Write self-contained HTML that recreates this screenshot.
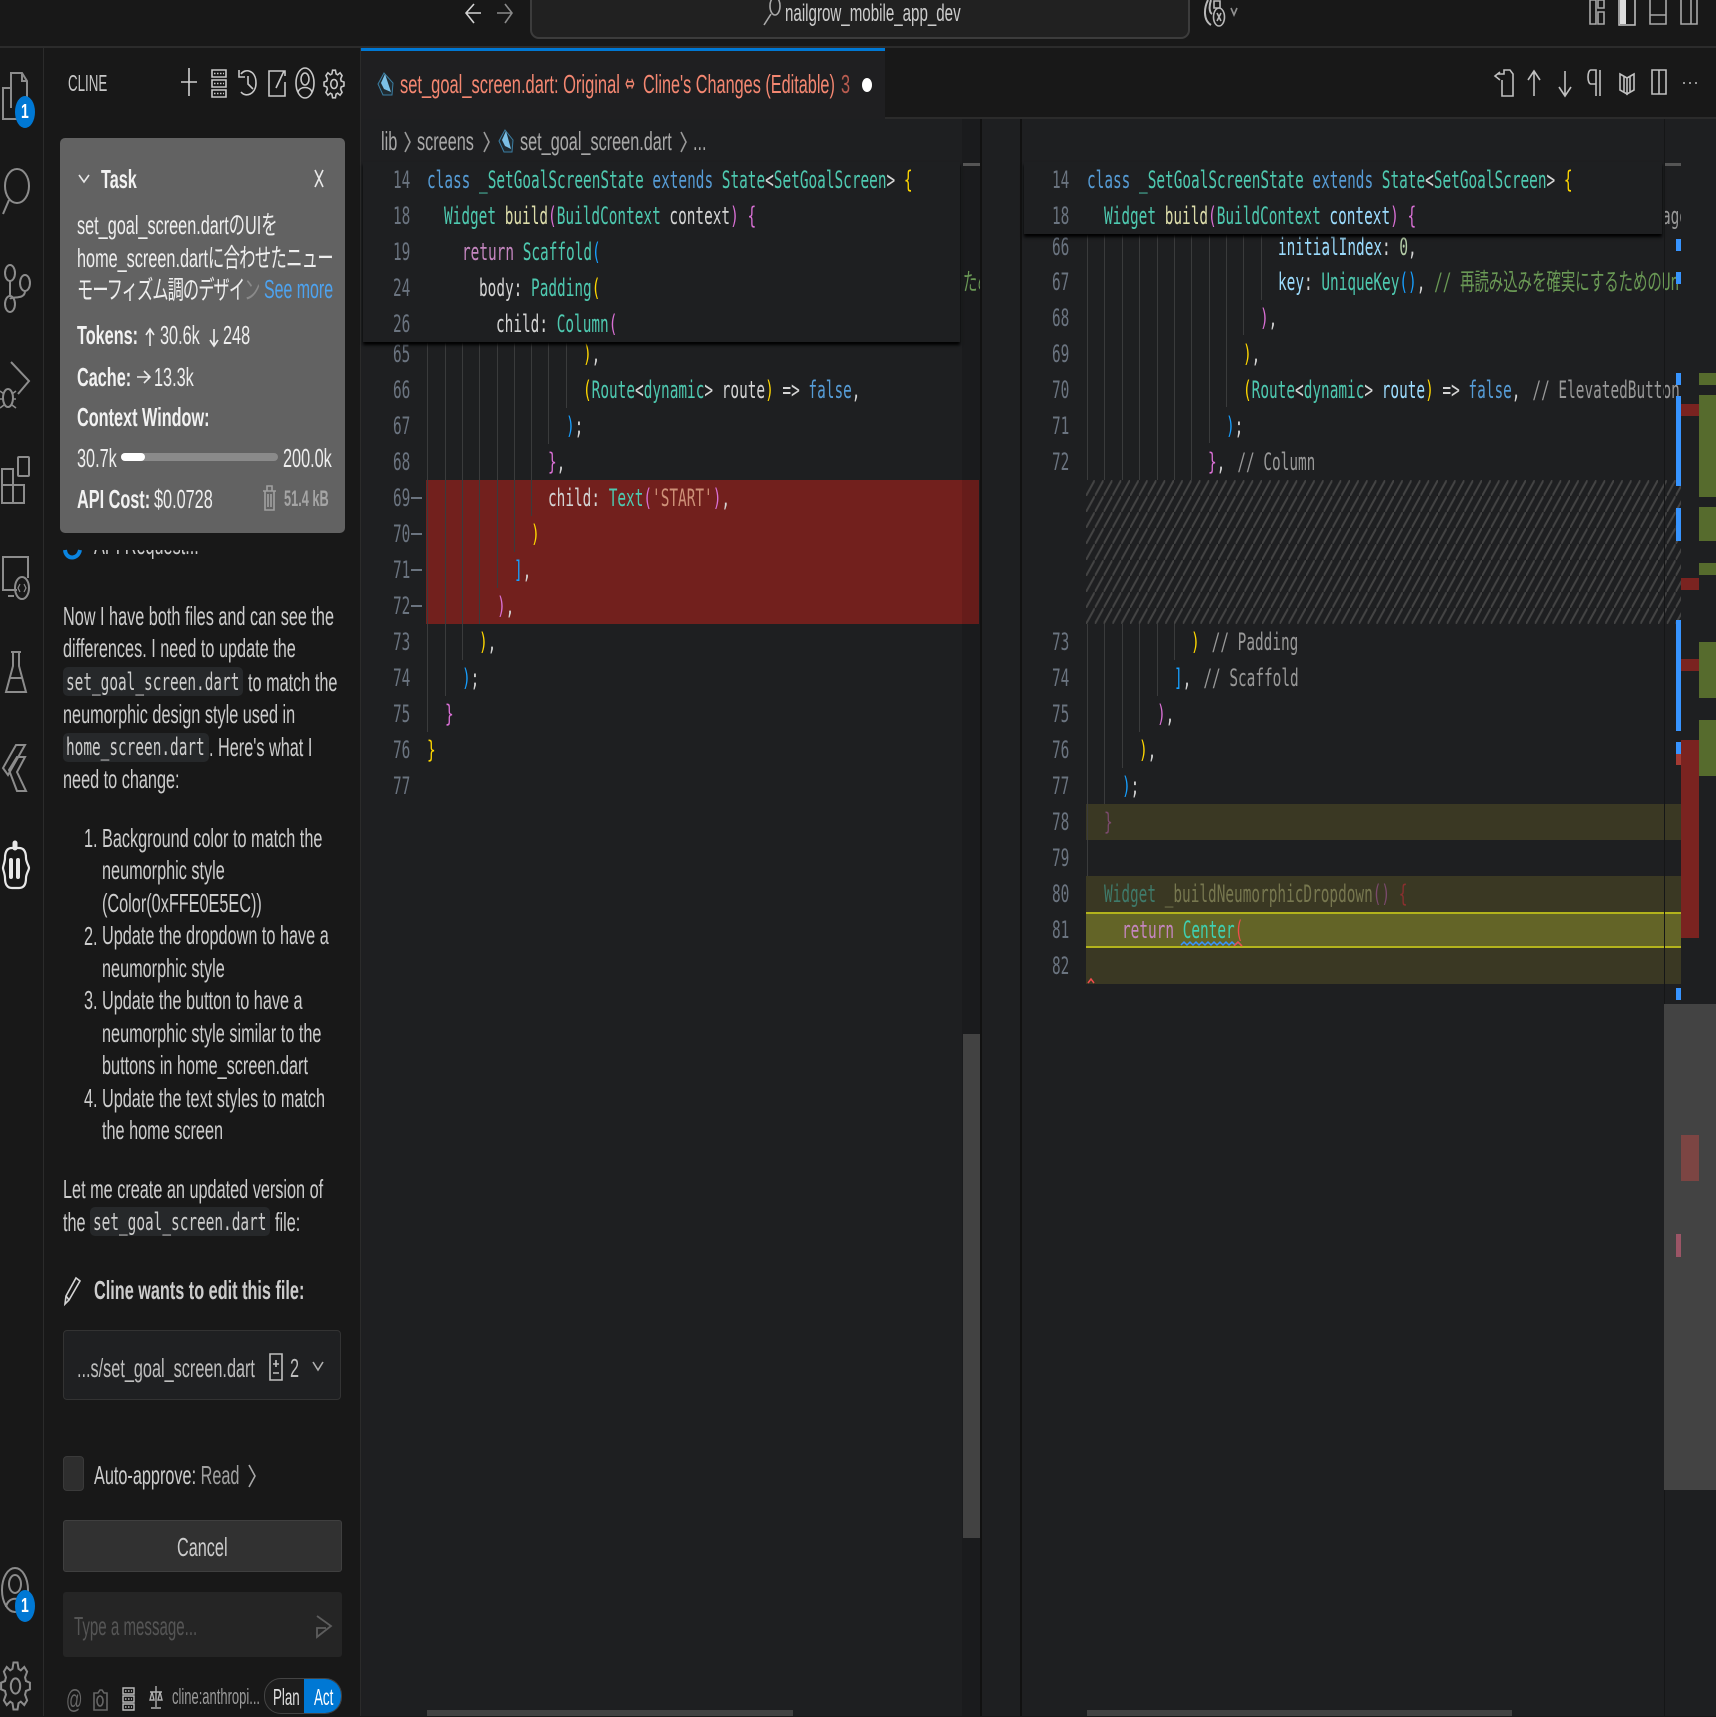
<!DOCTYPE html>
<html><head><meta charset="utf-8"><style>
html,body{margin:0;padding:0;background:#181818;width:1716px;height:1716px;overflow:hidden}
.a{position:absolute}
.t{position:absolute;white-space:pre;transform-origin:0 50%;transform:scaleX(.6);line-height:36px;height:36px;font-family:"DejaVu Sans Mono","Noto Sans CJK JP",monospace;font-size:24px;color:#d4d4d4}
.s{font-family:"Liberation Sans","Noto Sans CJK JP",sans-serif;font-size:26px;color:#ccc;transform:scaleX(.625)}
.n{color:#6b7480}
.g{position:absolute;width:1px;background:#3a3b3c}
.k{color:#569cd6}.y{color:#4ec9b0}.f{color:#dcdcaa}.v{color:#9cdcfe}.r{color:#c586c0}.go{color:#ffd700}.p{color:#da70d6}.b{color:#179fff}.w{color:#d4d4d4}.cg{color:#6a9955}.cd{color:#989898;margin-left:5.5px}.st{color:#ce9178}.nu{color:#b5cea8}
.bo{font-weight:bold}
.chip{position:absolute;background:#26282a;border-radius:5px;height:29px}
</style></head><body>
<!-- chrome backgrounds -->
<div class="a" style="left:0;top:0;width:1716px;height:46px;background:#181818"></div>
<div class="a" style="left:0;top:46px;width:1716px;height:2px;background:#2b2b2b"></div>
<div class="a" style="left:43px;top:48px;width:1px;height:1668px;background:#2b2b2b"></div>
<div class="a" style="left:361px;top:48px;width:1355px;height:70px;background:#181818"></div>
<div class="a" style="left:361px;top:117px;width:1355px;height:2px;background:#2b2b2b"></div>
<div class="a" style="left:360px;top:48px;width:1px;height:1668px;background:#2b2b2b"></div>
<div class="a" style="left:361px;top:119px;width:1355px;height:1597px;background:#1e1f21"></div>
<div class="a" style="left:361px;top:48px;width:524px;height:71px;background:#1f1f21"></div>
<div class="a" style="left:361px;top:48px;width:524px;height:3px;background:#0078d4"></div>
<div class="a" style="left:530px;top:-3px;width:656px;height:38px;background:#212121;border:2px solid #3c3c3c;border-radius:0 0 9px 9px"></div>
<!-- search text -->
<div class="t s" style="left:785px;top:-4px;font-size:24.2px;color:#ccc">nailgrow_mobile_app_dev</div>
<!-- tab -->
<div class="t s" style="left:400px;top:66px;font-size:26px;color:#f48771;transform:scaleX(.634)">set_goal_screen.dart: Original</div>
<div class="t s" style="left:625px;top:66px;font-family:'DejaVu Sans',sans-serif;font-size:26px;color:#f48771;transform:scaleX(.45)">⇔</div>
<div class="t s" style="left:642.5px;top:66px;font-size:26px;color:#f48771">Cline's Changes (Editable)</div>
<div class="t s" style="left:841px;top:66px;color:#b85c50;font-size:26px">3</div>
<div class="a" style="left:862px;top:78px;width:10px;height:14px;background:#fff;border-radius:50%"></div>
<!-- breadcrumb -->
<div class="t s" style="left:381px;top:123px;color:#a8a8a8">lib</div>
<div class="t s" style="left:417px;top:123px;color:#a8a8a8">screens</div>
<div class="t s" style="left:520px;top:123px;color:#a8a8a8">set_goal_screen.dart</div>
<div class="t s" style="left:693px;top:123px;color:#a8a8a8">...</div>

<!-- sidebar -->
<div class="t s" style="left:68px;top:65px;font-size:23px;color:#c8c8c8;transform:scaleX(.58)">CLINE</div>
<div class="a" style="left:60px;top:138px;width:285px;height:395px;background:#626262;border-radius:5px"></div>
<div class="t s bo" style="left:101px;top:161px;color:#f2f2f2">Task</div>
<div class="t s" style="left:77px;top:207px;color:#eee">set_goal_screen.dartのUIを</div>
<div class="t s" style="left:77px;top:240px;color:#eee">home_screen.dart<span style="letter-spacing:-1px">に合わせたニュー</span></div>
<div class="t s" style="left:77px;top:272px;color:#eee;letter-spacing:-1.5px">モーフィズム調のデザイ<span style="color:#8a8a8a">ン</span></div>
<div class="t s" style="left:264px;top:272px;color:#4da3f0;font-size:25.5px">See more</div>
<div class="t s bo" style="left:77px;top:317px;color:#f2f2f2">Tokens:</div>
<div class="t s" style="left:160px;top:317px;color:#eee">30.6k</div>
<div class="t s" style="left:223px;top:317px;color:#eee">248</div>
<div class="t s bo" style="left:77px;top:359px;color:#f2f2f2">Cache:</div>
<div class="t s" style="left:154px;top:359px;color:#eee">13.3k</div>
<div class="t s bo" style="left:77px;top:399px;color:#f2f2f2">Context Window:</div>
<div class="t s" style="left:77px;top:440px;color:#eee">30.7k</div>
<div class="a" style="left:121px;top:453px;width:157px;height:8px;background:#8a8a8a;border-radius:4px"></div>
<div class="a" style="left:121px;top:453px;width:24px;height:8px;background:#fff;border-radius:4px"></div>
<div class="t s" style="left:283px;top:440px;color:#eee">200.0k</div>
<div class="t s bo" style="left:77px;top:481px;color:#f2f2f2">API Cost:</div>
<div class="t s" style="left:154px;top:481px;color:#eee">$0.0728</div>
<div class="t s bo" style="left:284px;top:481px;color:#a5a5a5;font-size:22px;transform:scaleX(.58)">51.4 kB</div>

<div class="a" style="left:90px;top:550px;width:120px;height:9px;overflow:hidden"><div class="t s" style="left:4px;top:-23px;color:#ccc">API Request...</div></div>

<!-- message -->
<div class="chip" style="left:63px;top:667px;width:180px"></div>
<div class="chip" style="left:63px;top:733px;width:146px"></div>
<div class="chip" style="left:90px;top:1207px;width:180px"></div>
<div class="t s" style="left:63px;top:598px">Now I have both files and can see the</div>
<div class="t s" style="left:63px;top:630px">differences. I need to update the</div>
<div class="t" style="left:66px;top:664px;color:#ccc">set_goal_screen.dart</div>
<div class="t s" style="left:248px;top:664px">to match the</div>
<div class="t s" style="left:63px;top:696px">neumorphic design style used in</div>
<div class="t" style="left:66px;top:729px;color:#ccc">home_screen.dart</div>
<div class="t s" style="left:209px;top:729px">. Here's what I</div>
<div class="t s" style="left:63px;top:761px">need to change:</div>
<div class="t s" style="left:84px;top:820px">1.</div><div class="t s" style="left:102px;top:820px">Background color to match the</div>
<div class="t s" style="left:102px;top:852px">neumorphic style</div>
<div class="t s" style="left:102px;top:885px">(Color(0xFFE0E5EC))</div>
<div class="t s" style="left:84px;top:918px">2.</div><div class="t s" style="left:102px;top:917px">Update the dropdown to have a</div>
<div class="t s" style="left:102px;top:950px">neumorphic style</div>
<div class="t s" style="left:84px;top:982px">3.</div><div class="t s" style="left:102px;top:982px">Update the button to have a</div>
<div class="t s" style="left:102px;top:1015px">neumorphic style similar to the</div>
<div class="t s" style="left:102px;top:1047px">buttons in home_screen.dart</div>
<div class="t s" style="left:84px;top:1080px">4.</div><div class="t s" style="left:102px;top:1080px">Update the text styles to match</div>
<div class="t s" style="left:102px;top:1112px">the home screen</div>
<div class="t s" style="left:63px;top:1171px">Let me create an updated version of</div>
<div class="t s" style="left:63px;top:1204px">the</div>
<div class="t" style="left:93px;top:1204px;color:#ccc">set_goal_screen.dart</div>
<div class="t s" style="left:275px;top:1204px">file:</div>
<div class="t s bo" style="left:94px;top:1272px">Cline wants to edit this file:</div>
<div class="a" style="left:63px;top:1330px;width:278px;height:70px;background:#1f2022;border:1px solid #333;border-radius:4px;box-sizing:border-box"></div>
<div class="t s" style="left:77px;top:1350px;color:#bdbdbd">...s/set_goal_screen.dart</div>
<div class="t s" style="left:290px;top:1350px;color:#bdbdbd">2</div>
<div class="a" style="left:63px;top:1456px;width:21px;height:35px;background:#2e2e2e;border:1px solid #3a3a3a;border-radius:4px;box-sizing:border-box"></div>
<div class="t s" style="left:94px;top:1457px">Auto-approve: <span style="color:#a0a0a0">Read</span></div>
<div class="a" style="left:63px;top:1520px;width:279px;height:52px;background:#313131;border:1px solid #3f3f3f;border-radius:3px;box-sizing:border-box"></div>
<div class="t s" style="left:177px;top:1529px">Cancel</div>
<div class="a" style="left:63px;top:1592px;width:279px;height:65px;background:#252525;border-radius:3px"></div>
<div class="t s" style="left:74px;top:1608px;color:#555;transform:scaleX(.58)">Type a message...</div>
<div class="t s" style="left:172px;top:1679px;font-size:22px;color:#9a9a9a;transform:scaleX(.59)">cline:anthropi...</div>
<div class="t s" style="left:66px;top:1681px;color:#666">@</div>
<div class="a" style="left:264px;top:1678px;width:78px;height:36px;background:#1d1d1d;border:1px solid #444;border-radius:17px;box-sizing:border-box;overflow:hidden"><div class="a" style="left:39px;top:0;width:39px;height:36px;background:#0078d4"></div></div>
<div class="t s" style="left:273px;top:1679px;font-size:23px;color:#e0e0e0;transform:scaleX(.58)">Plan</div>
<div class="t s" style="left:314px;top:1679px;font-size:23px;color:#fff;transform:scaleX(.58)">Act</div>

<!-- left pane -->
<div class="a" style="left:426px;top:480px;width:553px;height:144px;background:#72201d"></div>
<div class="a" style="left:962px;top:119px;width:18px;height:1597px;background:rgba(0,0,0,.1)"></div>
<div class="a" style="left:980px;top:119px;width:2px;height:1597px;background:#111"></div>
<div class="a" style="left:1020px;top:119px;width:2px;height:1597px;background:#111"></div>
<div class="g" style="left:427px;top:342px;height:390px"></div>
<div class="g" style="left:445px;top:342px;height:354px"></div>
<div class="g" style="left:462px;top:342px;height:318px"></div>
<div class="g" style="left:479px;top:342px;height:282px"></div>
<div class="g" style="left:497px;top:342px;height:246px"></div>
<div class="g" style="left:514px;top:342px;height:210px"></div>
<div class="g" style="left:531px;top:342px;height:174px"></div>
<div class="g" style="left:548px;top:342px;height:102px"></div>
<div class="g" style="left:566px;top:342px;height:66px"></div>
<div class="a" style="left:0;top:0;width:1716px;height:1716px;clip-path:inset(342px 737px 0 361px)">
<div class="t n" style="left:393px;top:336px">65</div><div class="t" style="left:583px;top:336px"><span class="go">)</span>,</div>
<div class="t n" style="left:393px;top:372px">66</div><div class="t" style="left:583px;top:372px"><span class="go">(</span><span class="y">Route</span>&lt;<span class="y">dynamic</span>&gt; route<span class="go">)</span> =&gt; <span class="k">false</span>,</div>
<div class="t n" style="left:393px;top:408px">67</div><div class="t" style="left:566px;top:408px"><span class="b">)</span>;</div>
<div class="t n" style="left:393px;top:444px">68</div><div class="t" style="left:548px;top:444px"><span class="p">}</span>,</div>
<div class="t n" style="left:393px;top:480px">69</div><div class="t" style="left:548px;top:480px">child: <span class="y">Text</span><span class="p">(</span><span class="st">'START'</span><span class="p">)</span>,</div>
<div class="t n" style="left:393px;top:516px">70</div><div class="t" style="left:531px;top:516px"><span class="go">)</span></div>
<div class="t n" style="left:393px;top:552px">71</div><div class="t" style="left:514px;top:552px"><span class="b">]</span>,</div>
<div class="t n" style="left:393px;top:588px">72</div><div class="t" style="left:497px;top:588px"><span class="p">)</span>,</div>
<div class="t n" style="left:393px;top:624px">73</div><div class="t" style="left:479px;top:624px"><span class="go">)</span>,</div>
<div class="t n" style="left:393px;top:660px">74</div><div class="t" style="left:462px;top:660px"><span class="b">)</span>;</div>
<div class="t n" style="left:393px;top:696px">75</div><div class="t" style="left:445px;top:696px"><span class="p">}</span></div>
<div class="t n" style="left:393px;top:732px">76</div><div class="t" style="left:427px;top:732px"><span class="go">}</span></div>
<div class="t n" style="left:393px;top:768px">77</div>
</div>
<div class="a" style="left:963px;top:270px;width:17px;height:28px;overflow:hidden"><div class="t cg" style="left:0;top:-6px">ため</div></div>
<div class="a" style="left:363px;top:162px;width:597px;height:180px;background:#1e1f21;box-shadow:0 3px 3px #000"></div>
<div class="t n" style="left:393px;top:162px">14</div><div class="t" style="left:427px;top:162px"><span class="k">class</span> <span class="y">_SetGoalScreenState</span> <span class="k">extends</span> <span class="y">State</span>&lt;<span class="y">SetGoalScreen</span>&gt; <span class="go">{</span></div>
<div class="t n" style="left:393px;top:198px">18</div><div class="t" style="left:444px;top:198px"><span class="y">Widget</span> <span class="f">build</span><span class="p">(</span><span class="y">BuildContext</span> context<span class="p">)</span> <span class="p">{</span></div>
<div class="t n" style="left:393px;top:234px">19</div><div class="t" style="left:462px;top:234px"><span class="r">return</span> <span class="y">Scaffold</span><span class="b">(</span></div>
<div class="t n" style="left:393px;top:270px">24</div><div class="t" style="left:479px;top:270px">body: <span class="y">Padding</span><span class="go">(</span></div>
<div class="t n" style="left:393px;top:306px">26</div><div class="t" style="left:496px;top:306px">child: <span class="y">Column</span><span class="p">(</span></div>
<div class="a" style="left:963px;top:163px;width:17px;height:3px;background:#555"></div>
<div class="a" style="left:963px;top:1034px;width:17px;height:504px;background:#424242"></div>
<div class="a" style="left:427px;top:1710px;width:366px;height:6px;background:#424242"></div>

<!-- right pane -->
<div class="a" style="left:1086px;top:480px;width:595px;height:144px;overflow:hidden"><svg width="595" height="144" style="display:block"><defs><pattern id="h" width="8.8" height="16" patternUnits="userSpaceOnUse"><path d="M-2.2 20 L2.2 12 M0 16 L8.8 0 M6.6 4 L11 -4" stroke="#444" stroke-width="2"/></pattern></defs><rect width="595" height="144" fill="url(#h)"/></svg></div>
<div class="a" style="left:1086px;top:804px;width:595px;height:36px;background:#3a3823"></div>
<div class="a" style="left:1086px;top:876px;width:595px;height:36px;background:#3a3823"></div>
<div class="a" style="left:1086px;top:912px;width:595px;height:36px;background:#636427;border-top:2px solid #b3b31c;border-bottom:2px solid #b3b31c;box-sizing:border-box"></div>
<div class="a" style="left:1086px;top:948px;width:595px;height:36px;background:#3a3823"></div>
<div class="g" style="left:1087px;top:234px;height:246px"></div><div class="g" style="left:1104px;top:234px;height:246px"></div><div class="g" style="left:1122px;top:234px;height:246px"></div><div class="g" style="left:1139px;top:234px;height:246px"></div><div class="g" style="left:1157px;top:234px;height:246px"></div><div class="g" style="left:1174px;top:234px;height:246px"></div><div class="g" style="left:1191px;top:234px;height:246px"></div>
<div class="g" style="left:1209px;top:234px;height:209px"></div><div class="g" style="left:1226px;top:234px;height:173px"></div><div class="g" style="left:1243px;top:234px;height:101px"></div><div class="g" style="left:1261px;top:234px;height:66px"></div>
<div class="g" style="left:1087px;top:624px;height:252px"></div><div class="g" style="left:1104px;top:624px;height:180px"></div><div class="g" style="left:1122px;top:624px;height:144px"></div><div class="g" style="left:1139px;top:624px;height:108px"></div><div class="g" style="left:1157px;top:624px;height:72px"></div><div class="g" style="left:1174px;top:624px;height:36px"></div>
<div class="a" style="left:0;top:0;width:1716px;height:1716px;clip-path:inset(234px 36px 0 1022px)">
<div class="t n" style="left:1052px;top:229px">66</div><div class="t v" style="left:1278px;top:229px">initialIndex<span class="w">:</span> <span class="nu">0</span><span class="w">,</span></div>
<div class="t n" style="left:1052px;top:264px">67</div><div class="t v" style="left:1278px;top:264px">key<span class="w">:</span> <span class="y">UniqueKey</span><span class="b">()</span><span class="w">,</span> <span class="cg">// 再読み込みを確実にするためのUniqueKey</span></div>
<div class="t n" style="left:1052px;top:300px">68</div><div class="t" style="left:1260px;top:300px"><span class="p">)</span>,</div>
<div class="t n" style="left:1052px;top:336px">69</div><div class="t" style="left:1243px;top:336px"><span class="go">)</span>,</div>
<div class="t n" style="left:1052px;top:372px">70</div><div class="t" style="left:1243px;top:372px"><span class="go">(</span><span class="y">Route</span>&lt;<span class="y">dynamic</span>&gt; <span class="v">route</span><span class="go">)</span> =&gt; <span class="k">false</span>, <span class="cd">// ElevatedButton</span></div>
<div class="t n" style="left:1052px;top:408px">71</div><div class="t" style="left:1226px;top:408px"><span class="b">)</span>;</div>
<div class="t n" style="left:1052px;top:444px">72</div><div class="t" style="left:1208px;top:444px"><span class="p">}</span>, <span class="cd">// Column</span></div>
<div class="t n" style="left:1052px;top:624px">73</div><div class="t" style="left:1191px;top:624px"><span class="go">)</span> <span class="cd">// Padding</span></div>
<div class="t n" style="left:1052px;top:660px">74</div><div class="t" style="left:1174px;top:660px"><span class="b">]</span>, <span class="cd">// Scaffold</span></div>
<div class="t n" style="left:1052px;top:696px">75</div><div class="t" style="left:1157px;top:696px"><span class="p">)</span>,</div>
<div class="t n" style="left:1052px;top:732px">76</div><div class="t" style="left:1139px;top:732px"><span class="go">)</span>,</div>
<div class="t n" style="left:1052px;top:768px">77</div><div class="t" style="left:1122px;top:768px"><span class="b">)</span>;</div>
<div class="t n" style="left:1052px;top:804px">78</div><div class="t" style="left:1104px;top:804px;color:#7a4a6c">}</div>
<div class="t n" style="left:1052px;top:840px">79</div>
<div class="t n" style="left:1052px;top:876px">80</div><div class="t" style="left:1104px;top:876px;color:#77774f"><span style="color:#3f7a6a">Widget</span> _buildNeumorphicDropdown<span style="color:#7a4a6c">()</span> <span style="color:#8a2f2f">{</span></div>
<div class="t n" style="left:1052px;top:912px">81</div><div class="t" style="left:1122px;top:912px"><span class="r">return</span> <span style="color:#3fd0b0">Center</span><span style="color:#f14c4c">(</span></div>
<div class="t n" style="left:1052px;top:948px">82</div>
</div>
<div class="a" style="left:1664px;top:198px;width:17px;height:36px;overflow:hidden"><div class="t" style="left:-2px;top:0;color:#999">age</div></div>
<div class="a" style="left:1024px;top:162px;width:638px;height:72px;background:#1e1f21;box-shadow:0 3px 3px #000"></div>
<div class="t n" style="left:1052px;top:162px">14</div><div class="t" style="left:1087px;top:162px"><span class="k">class</span> <span class="y">_SetGoalScreenState</span> <span class="k">extends</span> <span class="y">State</span>&lt;<span class="y">SetGoalScreen</span>&gt; <span class="go">{</span></div>
<div class="t n" style="left:1052px;top:198px">18</div><div class="t" style="left:1104px;top:198px"><span class="y">Widget</span> <span class="f">build</span><span class="p">(</span><span class="y">BuildContext</span> <span class="v">context</span><span class="p">)</span> <span class="p">{</span></div>
<div class="a" style="left:1664px;top:163px;width:17px;height:3px;background:#555"></div>
<div class="a" style="left:1087px;top:1710px;width:425px;height:6px;background:#424242"></div>

<!-- overview ruler -->
<div class="a" style="left:1664px;top:119px;width:1px;height:1597px;background:#151617"></div>
<div class="a" style="left:1664px;top:1004px;width:52px;height:486px;background:#434343"></div>
<div class="a" style="left:1681px;top:1135px;width:18px;height:46px;background:#7c4543"></div>
<div class="a" style="left:1676px;top:1234px;width:5px;height:23px;background:#9b5566"></div>
<div class="a" style="left:1676px;top:239px;width:5px;height:12px;background:#3794ff"></div>
<div class="a" style="left:1676px;top:272px;width:5px;height:12px;background:#3794ff"></div>
<div class="a" style="left:1676px;top:373px;width:5px;height:12px;background:#3794ff"></div>
<div class="a" style="left:1676px;top:396px;width:5px;height:90px;background:#3794ff"></div>
<div class="a" style="left:1676px;top:508px;width:5px;height:33px;background:#3794ff"></div>
<div class="a" style="left:1676px;top:620px;width:5px;height:111px;background:#3794ff"></div>
<div class="a" style="left:1676px;top:742px;width:5px;height:12px;background:#3794ff"></div>
<div class="a" style="left:1676px;top:754px;width:5px;height:11px;background:#a33a33"></div>
<div class="a" style="left:1676px;top:988px;width:5px;height:12px;background:#3794ff"></div>
<div class="a" style="left:1681px;top:404px;width:18px;height:12px;background:#7a2320"></div>
<div class="a" style="left:1681px;top:578px;width:18px;height:12px;background:#7a2320"></div>
<div class="a" style="left:1681px;top:659px;width:18px;height:12px;background:#7a2320"></div>
<div class="a" style="left:1681px;top:740px;width:18px;height:198px;background:#7a2320"></div>
<div class="a" style="left:1699px;top:373px;width:17px;height:12px;background:#566b2d"></div>
<div class="a" style="left:1699px;top:395px;width:17px;height:102px;background:#566b2d"></div>
<div class="a" style="left:1699px;top:507px;width:17px;height:34px;background:#566b2d"></div>
<div class="a" style="left:1699px;top:563px;width:17px;height:12px;background:#566b2d"></div>
<div class="a" style="left:1699px;top:642px;width:17px;height:56px;background:#566b2d"></div>
<div class="a" style="left:1699px;top:720px;width:17px;height:56px;background:#566b2d"></div>

<!-- icons -->
<svg class="a" style="left:0;top:0" width="1716" height="1716" viewBox="0 0 1716 1716" fill="none" stroke="#8c8c8c" stroke-width="1.6">
 <!-- deleted-line markers -->
 <path d="M411 498H422M411 534H422M411 570H422M411 606H422" stroke="#6b7480" stroke-width="2"/>
 <!-- activity -->
 <path d="M11 108V73h11l5 8v27M22 73v8h5M11 88H3v31h17v-8" stroke-width="2"/>
 <ellipse cx="17" cy="186" rx="12" ry="17" stroke-width="2"/><path d="M9 200L3 214" stroke-width="2"/>
 <ellipse cx="10" cy="273" rx="5" ry="8" stroke-width="2"/><ellipse cx="10" cy="304" rx="5" ry="8" stroke-width="2"/><ellipse cx="25" cy="283" rx="5" ry="8" stroke-width="2"/><path d="M10 281V296M25 291C25 300 12 296 10 299" stroke-width="2"/>
 <path d="M11 362L29 381L18 394" stroke-width="2"/><ellipse cx="8" cy="398" rx="5" ry="9" stroke-width="2"/><path d="M0 391l4 3M16 391l-4 3M0 399h4M16 399h-4M0 408l4-3M16 408l-4-3" stroke-width="1.6"/>
 <rect x="18" y="457" width="11" height="19" rx="1" stroke-width="2"/><path d="M2 469H13V485H24V503H2ZM2 485H13V503" stroke-width="2"/>
 <path d="M28 578V557H3V590H17M8 596H14" stroke-width="2"/><ellipse cx="22" cy="588" rx="7" ry="11" stroke-width="2"/><path d="M20 584l-2 4 2 4M24 584l2 4-2 4" stroke-width="1.2"/>
 <path d="M11 652h10M13 652v14L6 692h20l-7-26V652M9 678h14" stroke-width="2"/>
 <path d="M25 745H16L3 768L8 775ZM25 757H17L9 770L17 791H26L17 772Z" stroke-width="2"/>
 <path d="M15 848V843" stroke="#e8e8e8" stroke-width="5" stroke-linecap="round"/><path d="M12 848H19C24 848 26 852 26 858C26 862 29 866 29 868C29 870 26 874 26 878C26 884 24 888 19 888H12C7 888 5 884 5 878C5 874 3 870 3 868C3 866 5 862 5 858C5 852 7 848 12 848Z" stroke="#e8e8e8" stroke-width="2.2"/><path d="M11 860V877M18 860V877" stroke="#e8e8e8" stroke-width="4" stroke-linecap="round"/>
 <ellipse cx="15" cy="1590" rx="13" ry="22" stroke-width="2"/><ellipse cx="15" cy="1584" rx="6" ry="9" stroke-width="2"/><path d="M6 1607C8 1596 22 1596 24 1607" stroke-width="2"/>
 <g transform="translate(15.5 1686) scale(1.04 1.7)"><path vector-effect="non-scaling-stroke" stroke-width="2" d="M10.09 -2.89L13.86 -1.95L13.86 1.95L10.09 2.89L9.18 5.09L11.18 8.43L8.43 11.18L5.09 9.18L2.89 10.09L1.95 13.86L-1.95 13.86L-2.89 10.09L-5.09 9.18L-8.43 11.18L-11.18 8.43L-9.18 5.09L-10.09 2.89L-13.86 1.95L-13.86 -1.95L-10.09 -2.89L-9.18 -5.09L-11.18 -8.43L-8.43 -11.18L-5.09 -9.18L-2.89 -10.09L-1.95 -13.86L1.95 -13.86L2.89 -10.09L5.09 -9.18L8.43 -11.18L11.18 -8.43L9.18 -5.09Z"/><circle r="4.5" vector-effect="non-scaling-stroke" stroke-width="2"/></g>
 <!-- badges -->
 <ellipse cx="25" cy="112" rx="10" ry="16" fill="#0078d4" stroke="none"/><ellipse cx="25" cy="1606" rx="10" ry="16" fill="#0078d4" stroke="none"/>
 <!-- header -->
 <path d="M189 68V96M181 82H197" stroke="#d0d0d0"/>
 <path d="M212 70H226V77H212ZM212 80H226V87H212ZM212 90H226V97H212Z" stroke="#c8c8c8" stroke-width="1.6"/><path d="M214 73.5H224M214 83.5H224M214 93.5H224" stroke="#c8c8c8" stroke-dasharray="1.5 1.5"/>
 <path d="M241 74C245 68 256 70 256 83C256 94 246 98 241 92M248 76V84L253 89M239 70V77H245" stroke="#c8c8c8"/>
 <path d="M281 71H269V96H285V82M276 88L284 71M279 71H285V76" stroke="#c8c8c8"/>
 <ellipse cx="305" cy="83" rx="9" ry="15" stroke="#c8c8c8"/><ellipse cx="305" cy="79" rx="4" ry="6" stroke="#c8c8c8"/><path d="M298 92C300 86 310 86 312 92" stroke="#c8c8c8"/>
 <g transform="translate(334 84) scale(.72 1)"><path vector-effect="non-scaling-stroke" stroke="#c8c8c8" stroke-width="1.6" d="M10.09 -2.89L13.86 -1.95L13.86 1.95L10.09 2.89L9.18 5.09L11.18 8.43L8.43 11.18L5.09 9.18L2.89 10.09L1.95 13.86L-1.95 13.86L-2.89 10.09L-5.09 9.18L-8.43 11.18L-11.18 8.43L-9.18 5.09L-10.09 2.89L-13.86 1.95L-13.86 -1.95L-10.09 -2.89L-9.18 -5.09L-11.18 -8.43L-8.43 -11.18L-5.09 -9.18L-2.89 -10.09L-1.95 -13.86L1.95 -13.86L2.89 -10.09L5.09 -9.18L8.43 -11.18L11.18 -8.43L9.18 -5.09Z"/><circle r="4.5" vector-effect="non-scaling-stroke" stroke="#c8c8c8" stroke-width="1.6"/></g>
 <!-- card -->
 <path d="M79 175L84 182L89 175M315 170L323 187M323 170L315 187" stroke="#e8e8e8"/>
 <path d="M150 346V329M146 335L150 329L154 335M214 329V346M210 340L214 346L218 340M137 377H149M144 371L150 377L144 383" stroke="#eee" stroke-width="1.6"/>
 <path d="M265 491V510H274V491ZM263 491H276M267 491V486H272V491M268 494V507M271 494V507" stroke="#a0a0a0"/>
 <!-- spinner -->
 <path d="M65 550C66 560 78 560 80 550" stroke="#0a84e0" stroke-width="4"/>
 <!-- pencil -->
 <path d="M65 1304L66 1296L76 1278L80 1281L69 1300ZM66 1296L69 1300" stroke="#d4d4d4"/>
 <!-- dropdown -->
 <path d="M270 1354H282V1380H270ZM276 1360V1367M273 1364H279M273 1373H279" stroke="#c0c0c0"/>
 <path d="M313 1362L318 1370L323 1362" stroke="#b0b0b0"/>
 <path d="M249 1465L255 1476L249 1487" stroke="#a8a8a8"/>
 <path d="M317 1616L331 1626L317 1637V1628H326" stroke="#5d5d5d" stroke-width="1.8"/>
 <!-- bottom row -->
 <path d="M94 1693H98L100 1690H102L104 1693H107V1710H94Z" stroke="#666"/><ellipse cx="100" cy="1701" rx="3" ry="5" stroke="#666"/>
 <path d="M123 1688H134V1694H123ZM123 1696H134V1702H123ZM123 1704H134V1710H123Z" stroke="#bbb" stroke-width="1.4"/><path d="M125 1691H132M125 1699H132M125 1707H132" stroke="#bbb" stroke-dasharray="1.5 1.5"/>
 <path d="M156 1686V1707M151 1708H161M150 1692H162M152 1692L150 1700H154ZM160 1692L158 1700H162Z" stroke="#b0b0b0" stroke-width="1.4"/>
 <!-- title -->
 <path d="M474 4L466 13L474 23M466 13H481" stroke="#d4d4d4"/>
 <path d="M505 4L512 13L505 23M512 13H497" stroke="#8a8a8a"/>
 <ellipse cx="775" cy="6" rx="5" ry="9" stroke="#aaa"/><path d="M771 14L764 25" stroke="#aaa"/>
 <path d="M1208 0C1204 8 1203 20 1211 25M1211 0C1209 6 1209 12 1212 14" stroke="#b8b8b8" stroke-width="2"/><path d="M1214 1h6v7h-6z" stroke="#b8b8b8"/><ellipse cx="1219" cy="17" rx="5.5" ry="9" stroke="#b8b8b8"/><path d="M1217 13L1221 21M1221 13L1217 21" stroke="#b8b8b8"/>
 <path d="M1231 8L1234 15L1237 8" stroke="#909090"/>
 <!-- top right -->
 <path d="M1590 0H1596V24H1590ZM1598 0H1604V8H1598ZM1598 12H1604V24H1598Z" stroke="#a8a8a8"/>
 <rect x="1619" y="-2" width="16" height="27" stroke="#bbb"/><rect x="1620" y="-2" width="6" height="26" fill="#ddd" stroke="none"/>
 <path d="M1650 -2V24H1666V-2M1650 15H1666" stroke="#a8a8a8"/>
 <path d="M1681 -2V24H1697V-2M1691 -2V24" stroke="#a8a8a8"/>
 <!-- tab actions -->
 <path d="M1498 74H1504V70H1510L1513 74V96H1502V80M1500 72L1495 76L1500 80" stroke="#c0c0c0"/>
 <path d="M1534 96V71M1528 80L1534 71L1540 80" stroke="#c0c0c0"/>
 <path d="M1565 71V96M1559 87L1565 96L1571 87" stroke="#c0c0c0"/>
 <path d="M1596 96V70H1591C1587 70 1587 84 1591 84H1596M1600 70V96" stroke="#c0c0c0"/>
 <path d="M1620 74L1627 78V94L1620 90ZM1627 78L1634 74V90L1627 94ZM1624 76V92M1630 76V92" stroke="#c0c0c0"/>
 <path d="M1652 70H1666V94H1652ZM1659 70V94" stroke="#c0c0c0"/>
 <path d="M1683 83h2M1689 83h2M1695 83h2" stroke="#c0c0c0"/>
 <!-- tab dart icon -->
 <path d="M384 73L378 84L383 95L392 95L393 83Z" fill="#1f2a30" stroke="#3b7ea3" stroke-width="1"/><path d="M385 74L391 92L384 89L381 83Z" fill="#7cc0e6" stroke="none"/>
 <path d="M505 130L499 141L504 152L512 152L513 140Z" fill="#1f2a30" stroke="#3b7ea3" stroke-width="1"/><path d="M506 131L511 149L505 146L502 140Z" fill="#7cc0e6" stroke="none"/>
 <path d="M405 132L410 142L405 152M484 132L489 142L484 152M681 132L686 142L681 152" stroke="#999"/>
 <!-- squiggles -->
 <path d="M1181 945l3 -3 3 3 3 -3 3 3 3 -3 3 3 3 -3 3 3 3 -3 3 3 3 -3 3 3 3 -3 3 3 3 -3 3 3 3 -3 3 3 3 -3 3 3" stroke="#3794ff" stroke-width="1.5"/>
 <path d="M1234 946l4 -4 4 4" stroke="#f14c4c" stroke-width="1.5"/>
 <path d="M1088 983l3 -4 3 4" stroke="#f14c4c" stroke-width="1.5"/>
</svg>
<div class="t s" style="left:21px;top:94px;font-size:20px;color:#fff;font-weight:bold;transform:scaleX(.7)">1</div>
<div class="t s" style="left:21px;top:1588px;font-size:20px;color:#fff;font-weight:bold;transform:scaleX(.7)">1</div>
</body></html>
